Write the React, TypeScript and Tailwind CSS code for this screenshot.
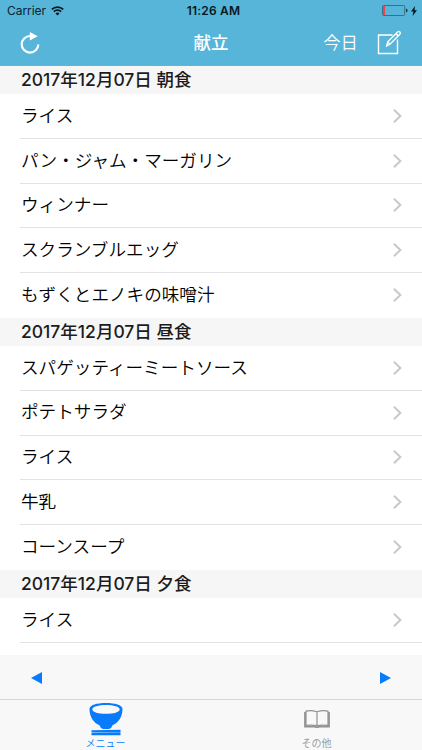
const sections = [
  { meal: '朝食', items: ['ライス', 'パン・ジャム・マーガリン', 'ウィンナー', 'スクランブルエッグ', 'もずくとエノキの味噌汁'] },
  { meal: '昼食', items: ['スパゲッティーミートソース', 'ポテトサラダ', 'ライス', '牛乳', 'コーンスープ'] },
  { meal: '夕食', items: ['ライス', ''] },
];

function StatusBar() {
  return (
    <div className="flex h-[21px] items-center justify-between pl-[7px] pr-[5px] pt-px text-[12px] text-[#0b2430]">
      <div className="flex w-[140px] items-center gap-[5px]">
        <span className="tracking-[-0.05px]">Carrier</span>
        <svg width="13" height="10" viewBox="0 0 13 10" fill="none" stroke="#081820" strokeWidth="1.7">
          <path d="M.8 3.4a8.3 8.3 0 0 1 11.4 0M2.8 5.6a5.3 5.3 0 0 1 7.4 0" />
          <path d="M4.5 7.4a2.9 2.9 0 0 1 4 0L6.5 9.6Z" fill="#081820" stroke="none" />
        </svg>
      </div>
      <span className="pl-[3px] font-semibold tracking-[0.2px] text-[#081820]">11:26 AM</span>
      <div className="flex w-[140px] items-center justify-end gap-[3px]">
        <svg width="26" height="11" viewBox="0 0 26 11" className="-mt-px">
          <rect x=".5" y=".5" width="22.2" height="10" rx="1.2" fill="none" stroke="#35687b" strokeWidth=".9" />
          <path d="M1 1h2v9H1z" fill="#f0434a" />
          <path d="M24 3.500q1.600.3 1.600 2t-1.600 2z" fill="#16394a" />
        </svg>
        <svg width="6" height="10" viewBox="0 0 6 10" className="-mt-px"><path d="M4 0 0 5.500h2.400L1.600 10 6 4.200H3.500Z" fill="#081820" /></svg>
      </div>
    </div>
  );
}

function NavBar() {
  return (
    <div className="flex h-11 items-center justify-between pl-[20px] pr-[20px] text-[17.4px] text-white">
      <div className="w-[140px]">
        <svg width="20" height="22" viewBox="0 0 20 22" fill="none">
          <path d="M10 4a8.300 8.300 0 1 0 8.300 8.500" stroke="white" strokeWidth="2.2" />
          <path d="M9.800 0 17.700 4.300 9.800 8.600Z" fill="white" />
        </svg>
      </div>
      <h1 className="pt-px font-medium">献立</h1>
      <div className="flex w-[140px] items-center justify-end gap-[19px]">
        <span className="pt-px font-[350]">今日</span>
        <svg width="25" height="25" viewBox="0 0 25 25" fill="none" stroke="white" strokeWidth="1.4">
          <path d="M15.500 5H1.500v18.500h19V9.500" />
          <path d="m9.700 16 1-4.200L20.600 2q1.200-1.200 2.300-.1t-.1 2.300L13 14.300ZM10.900 12.100l1.900 2M19 3.700l2.200 2.200" />
        </svg>
      </div>
    </div>
  );
}

function Row({ label, last }: { label: string; last: boolean }) {
  return (
    <div className={`ml-[20px] flex h-[44.8px] items-center justify-between border-b pr-[20px] ${last ? 'border-transparent' : 'border-[#e3e3e5]'}`}>
      <span className="pl-[1px] text-[17.6px] font-[350] text-black">{label}</span>
      {label && (
        <svg width="9" height="14" viewBox="0 0 9 14" fill="none" stroke="#c7c7cc" strokeWidth="1.9">
          <path d="m.9 .8 6.500 6.200-6.500 6.200" />
        </svg>
      )}
    </div>
  );
}

export default function App() {
  return (
    <div className="flex h-[750px] w-[422px] flex-col overflow-hidden bg-white font-['Inter','Noto_Sans_CJK_JP',sans-serif]">
      <header className="h-[66px] shrink-0 border-b border-[#78adc2] bg-[#56b5d9]">
        <StatusBar />
        <NavBar />
      </header>
      <main className="h-[589px] shrink-0 overflow-hidden">
        {sections.map((section) => (
          <section key={section.meal}>
            <h2 className="flex h-[28px] items-center bg-[#f6f6f6] pl-[21px] pt-px text-[17.5px] font-medium text-[#1c1c1c]">
              2017年12月07日 {section.meal}
            </h2>
            {section.items.map((item, i) => (
              <Row key={i} label={item} last={i === 4} />
            ))}
          </section>
        ))}
      </main>
      <div className="flex h-[44px] shrink-0 items-center justify-between bg-[#f8f8f8] pl-[31px] pr-[31px] pt-px">
        <svg width="11" height="12" viewBox="0 0 11 12"><path d="M0 6 11 0v12z" fill="#087bfa" /></svg>
        <svg width="11" height="12" viewBox="0 0 11 12"><path d="M11 6 0 0v12z" fill="#087bfa" /></svg>
      </div>
      <nav className="grid h-[51px] shrink-0 grid-cols-2 border-t border-[#d6d6d6] bg-[#f8f8f8] text-[10px] leading-[12px]">
        <div className="flex flex-col items-center pt-[3px] text-[#087bfa]">
          <svg width="34" height="33" viewBox="0 0 34 33" fill="#087bfa">
            <path fillRule="evenodd" d="M.5 6C.5 2 8 0 17 0s16.500 2 16.500 6c0 8.500-4.500 14-10 16.200l-.5 1q-.8 2.800-3 2.800h-6q-2.200 0-3-2.800l-.5-1C5 20 .5 14.500.5 6ZM17 2C9.500 2 3.300 3.800 3.300 6.400S9.500 10.800 17 10.800s13.700-1.800 13.700-4.400S24.500 2 17 2Z" />
            <path d="M2.500 27.200 31.500 26.700v2.500l-29 .4ZM2.500 30l29-.4v2.700h-29z" />
          </svg>
          <span className="pt-px font-[350]">メニュー</span>
        </div>
        <div className="flex flex-col items-center pt-[10px] text-[#929292]">
          <svg width="26" height="19" viewBox="0 0 26 19" fill="none" stroke="#929292">
            <path d="M13 1.700Q7-.1 2 1.200v14.200Q8 14.600 13 15.700q5-1.100 11-.3V1.200Q19-.1 13 1.700Zm0 0v14" strokeWidth="1.2" />
            <path d="M1 2v14.700H11q2 1 4 0h10V2" strokeWidth="1.8" />
          </svg>
          <span className="pt-[8px] font-[350]">その他</span>
        </div>
      </nav>
    </div>
  );
}
